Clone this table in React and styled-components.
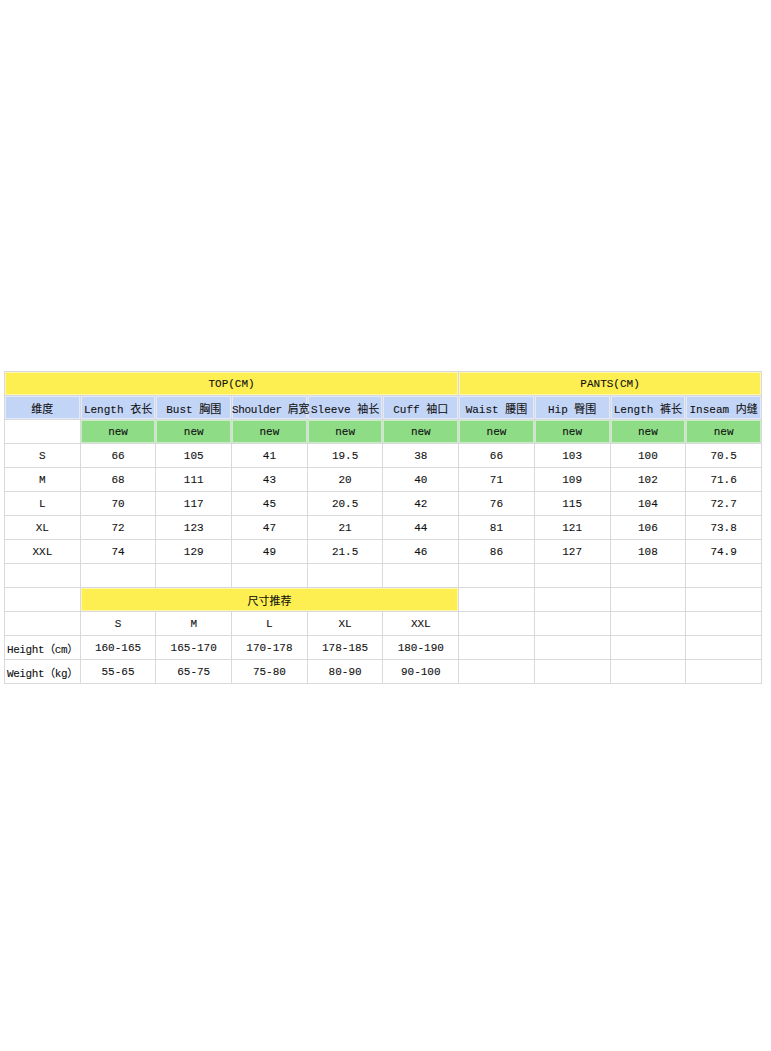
import React from 'react';
import styled, { createGlobalStyle } from 'styled-components';

const GlobalStyle = createGlobalStyle`
  html, body {
    margin: 0;
    padding: 0;
    background: #fff;
  }
`;

const Page = styled.div`
  width: 771px;
  min-height: 1051px;
  padding: 371px 0 0 4px;
  box-sizing: border-box;
`;

const Table = styled.table`
  width: 758px;
  table-layout: fixed;
  border-collapse: collapse;
  font-family: "Liberation Mono", "Noto Sans CJK SC", monospace;
  font-size: 11px;
  color: #111;
  -webkit-text-stroke: 0.1px #111;
`;

const bg = {
  yellow: '#fdef52',
  blue: '#c3d5f7',
  green: '#8edc86',
  white: '#fff'
};

const Cell = styled.td`
  height: 23px;
  padding: 0;
  text-align: center;
  vertical-align: middle;
  white-space: nowrap;
  overflow: visible;
  border: 1px solid #d9d9dd;
  background: ${p => bg[p.$tone || 'white']};
  box-shadow: ${p => (p.$tone && p.$tone !== 'white' ? 'inset 0 0 0 1px rgba(255,255,255,0.5)' : 'none')};
`;

const Label = styled.span`
  letter-spacing: ${p => (p.$tight ? '-0.4px' : '0')};
`;

const headers = [
  '维度', 'Length 衣长', 'Bust 胸围', 'Shoulder 肩宽', 'Sleeve 袖长',
  'Cuff 袖口', 'Waist 腰围', 'Hip 臀围', 'Length 裤长', 'Inseam 内缝'
];

const sizes = [
  ['S', '66', '105', '41', '19.5', '38', '66', '103', '100', '70.5'],
  ['M', '68', '111', '43', '20', '40', '71', '109', '102', '71.6'],
  ['L', '70', '117', '45', '20.5', '42', '76', '115', '104', '72.7'],
  ['XL', '72', '123', '47', '21', '44', '81', '121', '106', '73.8'],
  ['XXL', '74', '129', '49', '21.5', '46', '86', '127', '108', '74.9']
];

const advice = [
  ['', 'S', 'M', 'L', 'XL', 'XXL'],
  ['Height（cm）', '160-165', '165-170', '170-178', '178-185', '180-190'],
  ['Weight（kg）', '55-65', '65-75', '75-80', '80-90', '90-100']
];

const emptyPants = [0, 1, 2, 3];

export default function App() {
  return (
    <Page>
      <GlobalStyle />
      <Table>
        <colgroup>
          {headers.map((h, i) => (
            <col key={i} style={{ width: '10%' }} />
          ))}
        </colgroup>
        <tbody>
          <tr>
            <Cell $tone="yellow" colSpan={6}>TOP(CM)</Cell>
            <Cell $tone="yellow" colSpan={4}>PANTS(CM)</Cell>
          </tr>
          <tr>
            {headers.map((h, i) => (
              <Cell key={i} $tone="blue">
                <Label $tight={h.startsWith('Shoulder')}>{h}</Label>
              </Cell>
            ))}
          </tr>
          <tr>
            <Cell />
            {headers.slice(1).map((h, i) => (
              <Cell key={i} $tone="green">new</Cell>
            ))}
          </tr>
          {sizes.map(row => (
            <tr key={row[0]}>
              {row.map((v, i) => (
                <Cell key={i}>{v}</Cell>
              ))}
            </tr>
          ))}
          <tr>
            {headers.map((h, i) => (
              <Cell key={i} />
            ))}
          </tr>
          <tr>
            <Cell />
            <Cell $tone="yellow" colSpan={5}>尺寸推荐</Cell>
            {emptyPants.map(i => (
              <Cell key={i} />
            ))}
          </tr>
          {advice.map((row, r) => (
            <tr key={r}>
              {row.map((v, i) => (
                <Cell key={i}>
                  <Label $tight={i === 0}>{v}</Label>
                </Cell>
              ))}
              {emptyPants.map(i => (
                <Cell key={'p' + i} />
              ))}
            </tr>
          ))}
        </tbody>
      </Table>
    </Page>
  );
}
